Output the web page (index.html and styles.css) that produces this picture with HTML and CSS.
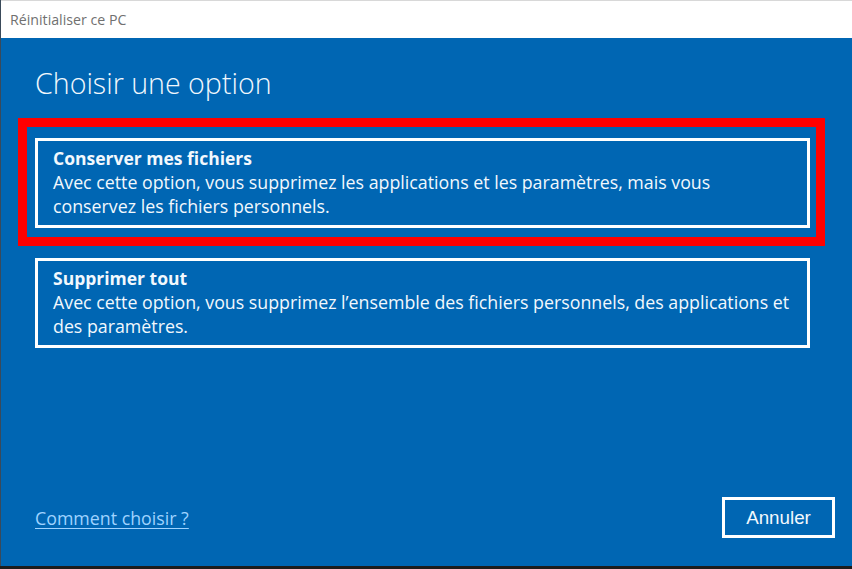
FILE: index.html
```html
<!DOCTYPE html>
<html lang="fr">
<head>
  <meta charset="UTF-8">
  <meta name="viewport" content="width=device-width, initial-scale=1">
  <title>Réinitialiser ce PC</title>
  <link rel="stylesheet" href="styles.css">
</head>
<body>

  <div class="window">
    <div class="titlebar">Réinitialiser ce PC</div>

    <div class="content">
      <h1>Choisir une option</h1>

      <div class="options">
        <div class="option highlighted">
          <strong>Conserver mes fichiers</strong>
          <p>Avec cette option, vous supprimez les applications et les paramètres, mais vous conservez les fichiers personnels.</p>
        </div>

        <div class="option">
          <strong>Supprimer tout</strong>
          <p>Avec cette option, vous supprimez l’ensemble des fichiers personnels, des applications et des paramètres.</p>
        </div>
      </div>

      <div class="footer">
        <a href="#">Comment choisir ?</a>
        <button type="button">Annuler</button>
      </div>
    </div>
  </div>

</body>
</html>
```

FILE: styles.css
```css
:root {
  --blue: #0066b3;
  --text-color: #f2f8fd;
  --link-color: #9fd3ff;
  --highlight: #ff0000;
}

* {
  box-sizing: border-box;
  margin: 0;
  padding: 0;
}

body {
  background-color: #1c1c1c;
  font-family: 'Open Sans', 'Noto Sans', sans-serif;
  width: 852px;
  height: 569px;
  overflow: hidden;
}

.window {
  height: 566px;
  display: flex;
  flex-direction: column;
  border-left: 1px solid #3a4a5a;
}

.titlebar {
  height: 38px;
  background-color: #fff;
  color: #707070;
  font-size: 14.2px;
  line-height: 37px;
  padding-left: 9px;
  border-top: 1px solid #d8d8d8;
}

.content {
  flex: 1;
  background-color: var(--blue);
  color: var(--text-color);
  display: flex;
  flex-direction: column;
  padding: 25px 17px 28px 34px;
}

h1 {
  font-weight: 300;
  font-size: 28.6px;
  line-height: 40px;
  margin-bottom: 35px;
}

.options {
  display: flex;
  flex-direction: column;
  gap: 30px;
  margin-right: 25px;
}

.option {
  position: relative;
  border: 3px solid #fff;
  padding: 5px 16px 7px 15px;
  min-height: 90px;
}

.option strong {
  display: block;
  font-size: 17.5px;
  font-weight: 700;
  line-height: 24px;
}

.option p {
  font-size: 17.8px;
  line-height: 24px;
}

/* annotation rouge autour de l'option choisie */
.highlighted::after {
  content: '';
  position: absolute;
  top: -23px;
  left: -20px;
  right: -18px;
  bottom: -21px;
  border: 9px solid var(--highlight);
}

.footer {
  margin-top: auto;
  display: flex;
  justify-content: space-between;
  align-items: center;
}

.footer a {
  color: var(--link-color);
  font-size: 17.8px;
  text-decoration: underline;
  text-underline-offset: 3px;
}

button {
  width: 113px;
  height: 41px;
  background: transparent;
  border: 3px solid #fff;
  color: var(--text-color);
  font-family: 'Liberation Sans', Arial, sans-serif;
  font-size: 18.8px;
}
```
